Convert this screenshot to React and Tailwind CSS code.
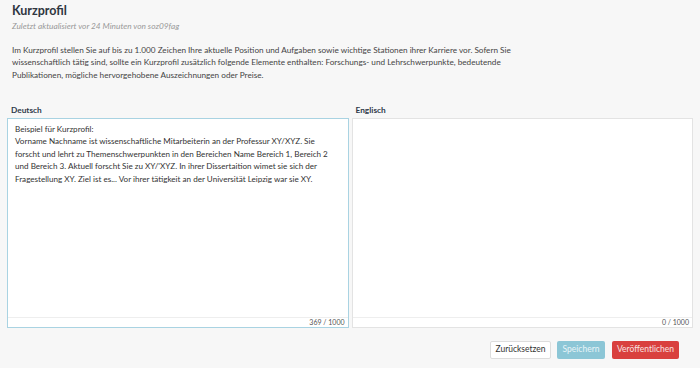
export default function App() {
  const font = { fontFamily: 'Lato, "Open Sans", sans-serif' };
  return (
    <div className="w-[700px] h-[368px] bg-[#f7f7f7] text-[#333]" style={font}>
      <div className="px-3 pt-[2px]">
        <h1 className="text-[12.5px] font-bold leading-[18px] text-[#2f3640]">Kurzprofil</h1>
        <p className="text-[8.3px] italic text-[#999] leading-[12px]">
          Zuletzt aktualisiert vor 24 Minuten von soz09fag
        </p>
        <p className="mt-[12px] text-[8.2px] leading-[12.25px] text-[#444] w-[520px]">
          Im Kurzprofil stellen Sie auf bis zu 1.000 Zeichen Ihre aktuelle Position und Aufgaben sowie wichtige Stationen ihrer Karriere vor. Sofern Sie
          wissenschaftlich tätig sind, sollte ein Kurzprofil zusätzlich folgende Elemente enthalten: Forschungs- und Lehrschwerpunkte, bedeutende
          Publikationen, mögliche hervorgehobene Auszeichnungen oder Preise.
        </p>
      </div>

      <div className="mt-[23px] px-[7px] flex gap-[3px]">
        <div className="flex-1 flex flex-col">
          <label className="pl-[4px] text-[8.3px] font-bold leading-[12px] text-[#2f3a4a]">Deutsch</label>
          <div className="mt-[2px] h-[210px] flex flex-col bg-white border border-[#a9d3e2]">
            <div className="flex-1 px-[7px] pt-[4px] text-[8.1px] leading-[12.5px] text-[#333]">
              Beispiel für Kurzprofil:
              <br />
              Vorname Nachname ist wissenschaftliche Mitarbeiterin an der Professur XY/XYZ. Sie
              forscht und lehrt zu Themenschwerpunkten in den Bereichen Name Bereich 1, Bereich 2
              und Bereich 3. Aktuell forscht Sie zu XY/'XYZ. In ihrer Dissertaition wimet sie sich der
              Fragestellung XY. Ziel ist es... Vor ihrer tätigkeit an der Universität Leipzig war sie XY.
            </div>
            <div className="h-[10px] border-t border-[#eeeeee] text-right pr-[3px] text-[7px] leading-[9px] text-[#555]">
              369 / 1000
            </div>
          </div>
        </div>
        <div className="flex-1 flex flex-col">
          <label className="pl-[4px] text-[8.3px] font-bold leading-[12px] text-[#2f3a4a]">Englisch</label>
          <div className="mt-[2px] h-[210px] flex flex-col bg-white border border-[#e3e3e3]">
            <div className="flex-1" />
            <div className="h-[10px] border-t border-[#eeeeee] text-right pr-[3px] text-[7px] leading-[9px] text-[#555]">
              0 / 1000
            </div>
          </div>
        </div>
      </div>

      <div className="mt-[13px] pr-[21px] flex justify-end gap-[6px]">
        <button className="h-[18px] w-[61px] bg-white border border-[#dddddd] rounded-[2px] text-[8.5px] text-[#333]">
          Zurücksetzen
        </button>
        <button className="h-[18px] w-[48px] bg-[#8cc6d6] rounded-[2px] text-[8.5px] text-[#e8f4f8]">
          Speichern
        </button>
        <button className="ml-[1px] h-[18px] w-[67px] bg-[#d9403e] rounded-[2px] text-[8.5px] text-[#f8e0e0]">
          Veröffentlichen
        </button>
      </div>
    </div>
  );
}
